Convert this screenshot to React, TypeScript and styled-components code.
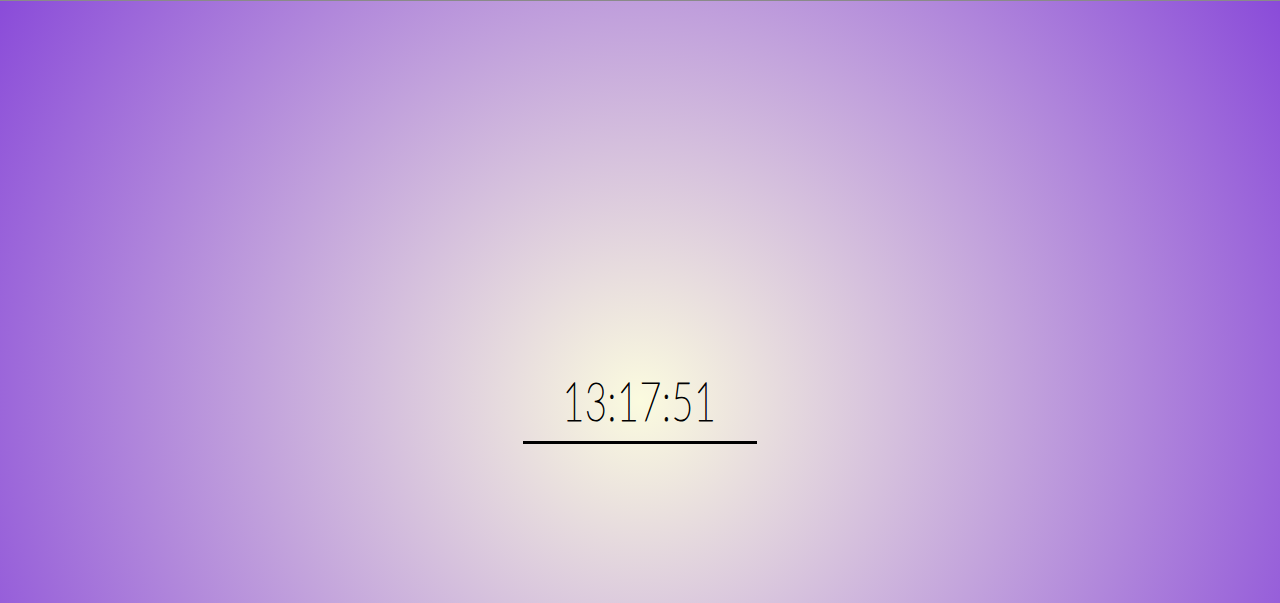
import React, { useState } from "react";
import styled, { createGlobalStyle } from "styled-components";

const Global = createGlobalStyle`
  html, body {
    margin: 0;
    padding: 0;
    height: 100%;
    overflow: hidden;
  }
  body {
    font-family: Lato, "Liberation Sans", sans-serif;
  }
`;

const Page = styled.main`
  box-sizing: border-box;
  height: 100vh;
  border-top: 1px solid #8a8a8a;
  padding-top: 214px;
  display: grid;
  place-items: center;
  background: radial-gradient(
    circle 755px at 640px 400px,
    #fbfbdf 0%,
    #8a4bd9 100%
  );
`;

const Clock = styled.div`
  box-sizing: border-box;
  width: 234px;
  padding: 0 0 14px;
  border-bottom: 3px solid #000;
  font-family: Lato, "Liberation Sans", sans-serif;
  font-weight: 100;
  font-size: 53px;
  line-height: 1;
  color: #000;
  text-align: center;
  white-space: nowrap;
`;

const Digits = styled.span`
  display: inline-block;
  letter-spacing: 1px;
  -webkit-text-stroke: 1.1px #000;
  transform: scaleX(0.71);
  transform-origin: center;
`;

export default function App() {
  const [time] = useState("13:17:51");
  return (
    <>
      <Global />
      <Page>
        <Clock>
          <Digits>{time}</Digits>
        </Clock>
      </Page>
    </>
  );
}
